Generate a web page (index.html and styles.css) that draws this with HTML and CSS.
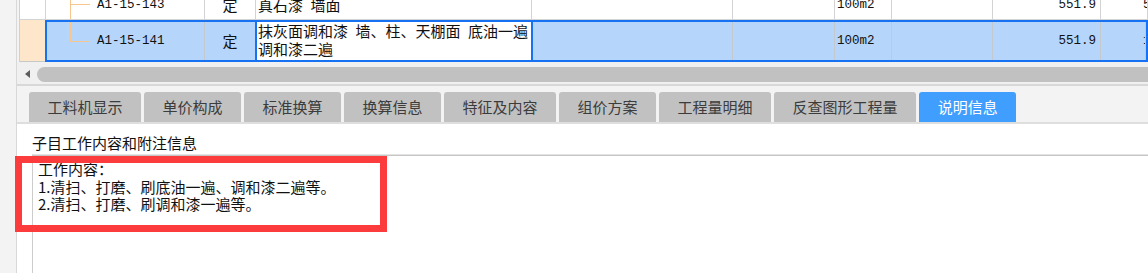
FILE: index.html
```html
<!DOCTYPE html>
<html lang="zh-CN">
<head>
  <meta charset="UTF-8">
  <title>说明信息</title>
  <link rel="stylesheet" href="styles.css">
</head>
<body>
  <div class="gutter"></div>

  <div class="main">
    <!-- quota grid, scrolled so the previous row is cut at the top -->
    <div class="grid">
      <div class="grid-inner">
        <div class="row">
          <div class="cell idx"></div>
          <div class="cell code"><span class="branch tee"></span><span class="mono">A1-15-143</span></div>
          <div class="cell type">定</div>
          <div class="cell name">真石漆&ensp;墙面</div>
          <div class="cell"></div>
          <div class="cell"></div>
          <div class="cell mono">100m2</div>
          <div class="cell"></div>
          <div class="cell num mono">551.9</div>
          <div class="cell tail mono">551.9</div>
        </div>
        <div class="row current">
          <div class="idx-current"></div>
          <div class="sel">
            <div class="cell code"><span class="branch elbow"></span><span class="mono">A1-15-141</span></div>
            <div class="cell type">定</div>
            <div class="cell edit">抹灰面调和漆&ensp;墙、柱、天棚面&ensp;底油一遍<br>调和漆二遍</div>
            <div class="cell"></div>
            <div class="cell"></div>
            <div class="cell mono">100m2</div>
            <div class="cell"></div>
            <div class="cell num mono">551.9</div>
            <div class="cell tail mono">1.000</div>
          </div>
        </div>
      </div>
    </div>

    <div class="hscroll">
      <span class="arrow"></span>
      <span class="thumb"></span>
    </div>

    <div class="tabs">
      <div class="tab">工料机显示</div>
      <div class="tab">单价构成</div>
      <div class="tab">标准换算</div>
      <div class="tab">换算信息</div>
      <div class="tab">特征及内容</div>
      <div class="tab">组价方案</div>
      <div class="tab">工程量明细</div>
      <div class="tab">反查图形工程量</div>
      <div class="tab active">说明信息</div>
    </div>

    <div class="panel">
      <div class="panel-title">子目工作内容和附注信息</div>
      <div class="memo">工作内容：<br>1.清扫、打磨、刷底油一遍、调和漆二遍等。<br>2.清扫、打磨、刷调和漆一遍等。</div>
    </div>
  </div>

  <!-- red annotation frame drawn over the memo -->
  <div class="mark"></div>
</body>
</html>
```

FILE: styles.css
```css
html, body {
  margin: 0;
  height: 273px;
}
body {
  position: relative;
  display: flex;
  overflow: hidden;
  background-color: #ffffff;
  font-family: "Noto Sans CJK SC", "Noto Sans", sans-serif;
  font-size: 15px;
  color: #111111;
}
.gutter {
  width: 16px;
  flex: none;
  background-color: #f3f3f3;
  border-right: 1px solid #d8d8d8;
}
.main {
  flex: 1;
  min-width: 0;
  display: flex;
  flex-direction: column;
}

/* grid */
.grid {
  height: 62px;
  flex: none;
  overflow: hidden;
  padding-left: 2px;
  background-color: #f3f3f3;
}
.grid-inner {
  margin-top: -10px;
}
.row {
  display: grid;
  grid-template-columns: 27px 159px 51px 276px 201px 102px 57px 101px 108px 1fr;
  height: 30px;
  background-color: #ffffff;
}
.cell {
  box-sizing: border-box;
  display: flex;
  align-items: center;
  padding: 0 2px;
  border-right: 1px solid #d3d3d3;
  border-bottom: 1px solid #d3d3d3;
  white-space: nowrap;
  overflow: hidden;
  line-height: 18px;
}
.idx {
  border-left: 1px solid #d0d0d0;
}
.code {
  padding-left: 24px;
}
.type {
  justify-content: center;
}
.num {
  justify-content: flex-end;
  padding-right: 4px;
}
.tail {
  padding-left: 42px;
}
.mono {
  font-family: "Liberation Mono", monospace;
  font-size: 12.5px;
}
.branch {
  align-self: stretch;
  width: 20px;
  flex: none;
  margin-right: 7px;
}
.tee {
  background:
    linear-gradient(#f7c68c, #f7c68c) left top / 1px 100% no-repeat,
    linear-gradient(#f7c68c, #f7c68c) left center / 100% 1px no-repeat;
}
.elbow {
  background:
    linear-gradient(#f7c68c, #f7c68c) left top / 1px 50% no-repeat,
    linear-gradient(#f7c68c, #f7c68c) left center / 100% 1px no-repeat;
}

/* selected row */
.row.current {
  display: flex;
  height: 42px;
  background-color: transparent;
}
.idx-current {
  box-sizing: border-box;
  width: 26px;
  flex: none;
  background-color: #fde6c9;
  border-left: 1px solid #d0d0d0;
  border-bottom: 1px solid #c8c8c8;
}
.sel {
  flex: 1;
  min-width: 0;
  box-sizing: border-box;
  display: grid;
  grid-template-columns: 158px 50px 278px 200px 102px 57px 101px 108px 1fr;
  border: 2px solid #1672f3;
  background-color: #b6d5fb;
}
.sel .cell {
  border-bottom: none;
  border-right-color: #c4c9d0;
}
.sel .code {
  padding-left: 23px;
}
.sel .type {
  border-right: none;
}
.sel .edit {
  align-items: flex-start;
  padding: 0 1px;
  background-color: #ffffff;
  border-left: 2px solid #1672f3;
  border-right: 2px solid #1672f3;
  white-space: normal;
}

/* horizontal scrollbar */
.hscroll {
  height: 24px;
  flex: none;
  box-sizing: border-box;
  display: flex;
  align-items: flex-start;
  padding-top: 5px;
  background-color: #f0f0f0;
  border-bottom: 2px solid #d8d8d8;
  overflow: hidden;
}
.arrow {
  width: 0;
  height: 0;
  margin: 3px 7px 0 8px;
  border-right: 5px solid #5c5c5c;
  border-top: 4px solid transparent;
  border-bottom: 4px solid transparent;
}
.thumb {
  flex: 1;
  height: 15px;
  margin-right: -20px;
  border-radius: 8px;
  background-color: #c1c1c1;
}

/* tabs */
.tabs {
  flex: none;
  display: flex;
  gap: 3px;
  padding: 6px 0 0 12px;
  background-color: #f3f3f3;
  border-bottom: 2px solid #dedede;
}
.tab {
  height: 30px;
  line-height: 30px;
  padding: 0 18.5px;
  border-radius: 3px 3px 0 0;
  background-color: #c1c1c1;
  color: #3c3c3c;
  white-space: nowrap;
}
.tab.active {
  background-color: #409eff;
  color: #ffffff;
}

/* description panel */
.panel {
  flex: 1;
  display: flex;
  flex-direction: column;
  background-color: #ffffff;
}
.panel-title {
  height: 30px;
  box-sizing: border-box;
  padding: 9px 0 0 15px;
  line-height: 20px;
  color: #111111;
}
.memo {
  flex: 1;
  margin-left: 15px;
  padding: 5px 0 0 5px;
  border-top: 1px solid #e4e4e4;
  border-left: 1px solid #cccccc;
  box-shadow: inset 0 1px 0 #c6c6c6;
  line-height: 17.5px;
  color: #111111;
}

.mark {
  position: absolute;
  left: 15px;
  top: 156px;
  width: 372px;
  height: 76px;
  box-sizing: border-box;
  border: 7px solid #fc3b3c;
}
```
